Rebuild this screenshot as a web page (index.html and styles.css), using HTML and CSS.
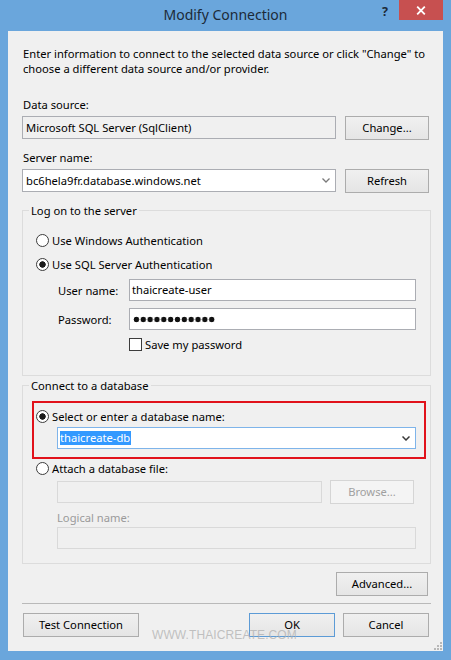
FILE: index.html
```html
<!DOCTYPE html>
<html>
<head>
<meta charset="utf-8">
<link rel="stylesheet" href="styles.css">
</head>
<body>
<div class="window">
  <div class="titlebar">
    <span class="tb-spacer"></span>
    <div class="title">Modify Connection</div>
    <div class="caption-buttons">
      <span class="help">?</span>
      <span class="close"><svg width="10" height="9" viewBox="0 0 10 9"><path d="M1.2 0.6 L8.8 8.4 M8.8 0.6 L1.2 8.4" stroke="#fff" stroke-width="1.8" fill="none"/></svg></span>
    </div>
  </div>
  <div class="client">
    <p class="intro">Enter information to connect to the selected data source or click "Change" to<br>choose a different data source and/or provider.</p>

    <div class="label lbl-ds">Data source:</div>
    <div class="row">
      <div class="textbox readonly wide">Microsoft SQL Server (SqlClient)</div>
      <button class="btn side">Change...</button>
    </div>

    <div class="label lbl-sn">Server name:</div>
    <div class="row">
      <div class="textbox combo wide">
        <span class="combo-text">bc6hela9fr.database.windows.net</span>
        <svg class="chev light" width="8" height="5" viewBox="0 0 8 5"><path d="M0.5 0.5 L4 4 L7.5 0.5" stroke="#7a7a7a" stroke-width="1.3" fill="none"/></svg>
      </div>
      <button class="btn side">Refresh</button>
    </div>

    <fieldset class="group logon">
      <legend>Log on to the server</legend>
      <div class="radio r-first"><span class="radio-mark"></span><span>Use Windows Authentication</span></div>
      <div class="radio r-second"><span class="radio-mark checked"></span><span>Use SQL Server Authentication</span></div>
      <div class="cred-row user-row">
        <span class="cred-label">User name:</span>
        <div class="textbox cred">thaicreate-user</div>
      </div>
      <div class="cred-row pw-row">
        <span class="cred-label">Password:</span>
        <div class="textbox cred"><span class="dots"></span></div>
      </div>
      <div class="check"><span class="checkbox"></span><span>Save my password</span></div>
    </fieldset>

    <fieldset class="group dbgroup">
      <legend>Connect to a database</legend>
      <div class="highlight-box">
        <div class="radio"><span class="radio-mark checked"></span><span>Select or enter a database name:</span></div>
        <div class="textbox combo focused db-combo">
          <span class="combo-text"><span class="selected">thaicreate-db</span></span>
          <svg class="chev" width="8" height="5" viewBox="0 0 8 5"><path d="M0.5 0.5 L4 4 L7.5 0.5" stroke="#3a3a3a" stroke-width="1.5" fill="none"/></svg>
        </div>
      </div>
      <div class="radio attach"><span class="radio-mark"></span><span>Attach a database file:</span></div>
      <div class="file-row">
        <div class="textbox disabled file-box"></div>
        <button class="btn disabled-btn browse">Browse...</button>
      </div>
      <div class="logical-label">Logical name:</div>
      <div class="textbox disabled logical-box"></div>
    </fieldset>

    <div class="adv-row"><button class="btn adv">Advanced...</button></div>
    <div class="separator"></div>
    <div class="bottom-row">
      <button class="btn test">Test Connection</button>
      <span class="bottom-spacer"></span>
      <button class="btn default ok">OK</button>
      <button class="btn cancel">Cancel</button>
    </div>

    <svg class="grip" width="9" height="9" viewBox="0 0 9 9">
      <rect x="7" y="1" width="2" height="2" fill="#b8b8b8"/>
      <rect x="4" y="4" width="2" height="2" fill="#b8b8b8"/>
      <rect x="7" y="4" width="2" height="2" fill="#b8b8b8"/>
      <rect x="1" y="7" width="2" height="2" fill="#b8b8b8"/>
      <rect x="4" y="7" width="2" height="2" fill="#b8b8b8"/>
      <rect x="7" y="7" width="2" height="2" fill="#b8b8b8"/>
    </svg>
  </div>
  <div class="watermark">WWW.THAICREATE.COM</div>
</div>
</body>
</html>
```

FILE: styles.css
```css
* { box-sizing: border-box; }
html, body { margin: 0; padding: 0; }
body {
  width: 451px;
  height: 660px;
  overflow: hidden;
  font-family: "Noto Sans", "Open Sans", sans-serif;
  font-size: 11.2px;
  line-height: 15px;
  color: #000;
}
.window {
  position: relative;
  width: 451px;
  height: 660px;
  background: #6aa6dc;
  padding: 0 8px 9px;
  display: flex;
  flex-direction: column;
}
.titlebar {
  height: 31px;
  margin: 0 -8px;
  display: grid;
  grid-template-columns: 1fr auto 1fr;
}
.title {
  font-size: 14px;
  line-height: 30px;
  color: #1c2a38;
}
.caption-buttons {
  display: flex;
  justify-content: flex-end;
  align-items: flex-start;
}
.help {
  width: 16px;
  margin: 4px 6px 0 0;
  font-weight: bold;
  font-size: 12.5px;
  line-height: 16px;
  text-align: center;
  color: #1c2a38;
}
.close {
  width: 44px;
  height: 20px;
  margin-right: 8px;
  background: #c75050;
  display: flex;
  align-items: center;
  justify-content: center;
}
.client {
  position: relative;
  flex: 1;
  background: #f0f0f0;
  padding: 15px 12px 0 14px;
}
.intro {
  margin: 0;
  padding-left: 1px;
  white-space: nowrap;
}
.label { padding-left: 1px; }
.lbl-ds { margin-top: 21px; }
.lbl-sn { margin-top: 10px; }
.row {
  display: flex;
  align-items: flex-start;
  margin-top: 4px;
  height: 24px;
}
.textbox {
  height: 23px;
  border: 1px solid #abadb3;
  background: #fff;
  padding: 0 3px;
  line-height: 21px;
  white-space: nowrap;
  overflow: hidden;
}
.textbox.readonly { background: #f0f0f0; }
.wide { width: 314px; }
.combo {
  display: flex;
  align-items: center;
  justify-content: space-between;
  padding-right: 5px;
}
.chev { flex: none; }
.btn {
  font: inherit;
  color: #000;
  height: 24px;
  border: 1px solid #acacac;
  background: linear-gradient(#f0f0f0, #e5e5e5);
  padding: 0;
  line-height: 20px;
  border-radius: 0;
}
.side { width: 84px; margin-left: 9px; }

.group {
  margin: 10px 0 0;
  padding: 0;
  border: 1px solid #dcdcdc;
  min-width: 0;
}
.group legend {
  margin-left: 6px;
  padding: 0 2px;
  line-height: 15px;
}
.logon { padding-bottom: 24px; }
.radio {
  display: flex;
  align-items: center;
  height: 16px;
  margin-left: 13px;
}
.r-first { margin-top: 14px; }
.r-second { margin-top: 8px; }
.radio-mark {
  width: 13px;
  height: 13px;
  border-radius: 50%;
  border: 1px solid #3c3c3c;
  background: #fff;
  margin-right: 3px;
  flex: none;
}
.radio-mark.checked {
  background: radial-gradient(circle, #1a1a1a 0 2.9px, #fff 3.5px);
}
.cred-row {
  display: grid;
  grid-template-columns: 71px 287px;
  align-items: center;
  margin-left: 35px;
  margin-top: 7px;
}
.cred { height: 22px; padding: 0 2px; line-height: 20px; }
.dots {
  display: inline-block;
  vertical-align: middle;
  width: 82px;
  height: 7px;
  margin-left: 1px;
  margin-top: -2px;
  background: radial-gradient(circle, #111 0 2.5px, transparent 3.1px) 0 0 / 6.85px 7px repeat-x;
}
.check {
  display: flex;
  align-items: center;
  height: 13px;
  margin-top: 8px;
  margin-left: 106px;
}
.checkbox {
  width: 13px;
  height: 13px;
  border: 1px solid #3c3c3c;
  background: #fff;
  margin-right: 3px;
  flex: none;
}

.dbgroup { margin-top: 2px; padding-bottom: 14px; }
.highlight-box {
  margin: 8px 4px 0 9px;
  border: 2px solid #e1121b;
  padding: 5px 0 8px 2px;
}
.highlight-box .radio { margin-left: 0; }
.db-combo {
  width: 359px;
  height: 22px;
  margin: 3px 0 0 21px;
  padding-left: 2px;
  line-height: 20px;
}
.focused { border-color: #7eb4ea; }
.selected {
  background: #3399ff;
  color: #fff;
  padding: 0 1px 0 0;
  display: inline-block;
  line-height: 14px;
}
.attach { margin-top: 1px; }
.file-row {
  display: flex;
  align-items: flex-start;
  margin: 4px 0 0 34px;
  height: 24px;
}
.disabled {
  background: #f0f0f0;
  border-color: #d9d9d9;
}
.file-box { width: 265px; height: 22px; margin-top: 1px; }
.browse { width: 84px; margin-left: 8px; }
.disabled-btn {
  color: #a0a0a0;
  background: #f4f4f4;
  border-color: #d5d5d5;
}
.logical-label {
  margin: 6px 0 0 34px;
  color: #9a9a9a;
}
.logical-box {
  width: 359px;
  height: 22px;
  margin: 2px 0 0 34px;
}
.adv-row {
  display: flex;
  justify-content: flex-end;
  margin-top: 8px;
  padding-right: 3px;
}
.adv { width: 92px; }
.separator {
  margin-top: 7px;
  height: 1px;
  background: #b9b9b9;
}
.bottom-row {
  display: flex;
  margin-top: 9px;
  padding: 0 2px 0 1px;
}
.bottom-spacer { flex: 1; }
.test { width: 116px; }
.ok { width: 86px; }
.cancel { width: 86px; margin-left: 8px; }
.default { border-color: #5c9bd6; }
.grip {
  position: absolute;
  right: 1px;
  bottom: 1px;
}
.watermark {
  position: absolute;
  left: 152px;
  top: 628px;
  font-family: "Liberation Sans", Arial, sans-serif;
  font-size: 12px;
  line-height: 14px;
  color: rgba(175, 175, 175, 0.75);
  letter-spacing: 0.1px;
}
```
